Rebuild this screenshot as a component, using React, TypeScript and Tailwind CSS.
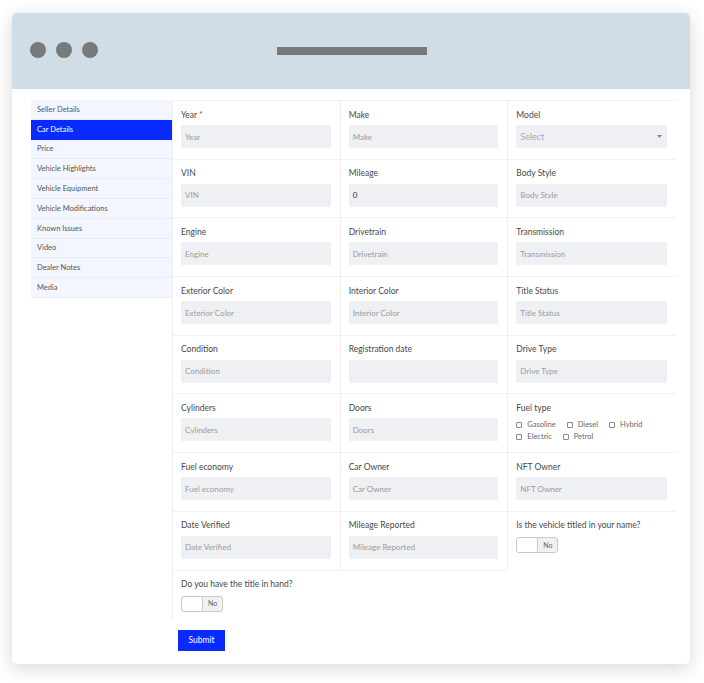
import React from "react";

const F = { fontFamily: "Lato, 'Open Sans', sans-serif" };

const sideItems = [
  "Seller Details",
  "Car Details",
  "Price",
  "Vehicle Highlights",
  "Vehicle Equipment",
  "Vehicle Modifications",
  "Known Issues",
  "Video",
  "Dealer Notes",
  "Media",
];

type Cell =
  | { kind: "input"; label: string; ph: string; value?: string; req?: boolean }
  | { kind: "select"; label: string }
  | { kind: "fuel"; label: string }
  | { kind: "toggle"; label: string };

const cells: Cell[] = [
  { kind: "input", label: "Year", ph: "Year", req: true },
  { kind: "input", label: "Make", ph: "Make" },
  { kind: "select", label: "Model" },
  { kind: "input", label: "VIN", ph: "VIN" },
  { kind: "input", label: "Mileage", ph: "", value: "0" },
  { kind: "input", label: "Body Style", ph: "Body Style" },
  { kind: "input", label: "Engine", ph: "Engine" },
  { kind: "input", label: "Drivetrain", ph: "Drivetrain" },
  { kind: "input", label: "Transmission", ph: "Transmission" },
  { kind: "input", label: "Exterior Color", ph: "Exterior Color" },
  { kind: "input", label: "Interior Color", ph: "Interior Color" },
  { kind: "input", label: "Title Status", ph: "Title Status" },
  { kind: "input", label: "Condition", ph: "Condition" },
  { kind: "input", label: "Registration date", ph: "" },
  { kind: "input", label: "Drive Type", ph: "Drive Type" },
  { kind: "input", label: "Cylinders", ph: "Cylinders" },
  { kind: "input", label: "Doors", ph: "Doors" },
  { kind: "fuel", label: "Fuel type" },
  { kind: "input", label: "Fuel economy", ph: "Fuel economy" },
  { kind: "input", label: "Car Owner", ph: "Car Owner" },
  { kind: "input", label: "NFT Owner", ph: "NFT Owner" },
  { kind: "input", label: "Date Verified", ph: "Date Verified" },
  { kind: "input", label: "Mileage Reported", ph: "Mileage Reported" },
  { kind: "toggle", label: "Is the vehicle titled in your name?" },
];

function Label({ text, req }: { text: string; req?: boolean }) {
  return (
    <div className="h-[12px] leading-[12px] text-[8.5px] text-[#484848] whitespace-nowrap">
      {text}
      {req && <span className="text-[#e53935] ml-[2px]">*</span>}
    </div>
  );
}

function Toggle() {
  return (
    <div className="flex h-[16px] w-[42px] rounded-[3px] border border-[#c9c9c9] bg-[#f1f1f1] overflow-hidden">
      <div className="w-[21px] h-full bg-white border-r border-[#c9c9c9] rounded-[2px]" />
      <div className="flex-1 flex items-center justify-center text-[7px] text-[#666]">No</div>
    </div>
  );
}

function Check({ label, gap }: { label: string; gap: string }) {
  return (
    <div className={`flex items-center ${gap}`}>
      <div className="w-[6px] h-[6px] border border-[#888] rounded-[1px] mr-[5px]" />
      <span className="text-[7.5px] text-[#666] leading-[10px]">{label}</span>
    </div>
  );
}

function CellView({ c, last, noBottom }: { c: Cell; last: boolean; noBottom: boolean }) {
  return (
    <div
      className={`h-[58.7px] pl-[8px] pr-[9px] pt-[7.5px] border-[#f0f0f0] ${last ? "" : "border-r"} ${noBottom ? "" : "border-b"}`}
    >
      <Label text={c.label} req={c.kind === "input" ? c.req : false} />
      {c.kind === "input" && (
        <div className="mt-[4.5px] h-[23px] bg-[#eff0f4] flex items-center pl-[4px] text-[8px]">
          {c.value ? (
            <span className="text-[#333]">{c.value}</span>
          ) : (
            <span className="text-[#9a9a9a]">{c.ph}</span>
          )}
        </div>
      )}
      {c.kind === "select" && (
        <div className="mt-[4.5px] h-[23px] bg-[#eff0f4] flex items-center justify-between pl-[4px] pr-[5px]">
          <span className="text-[9px] text-[#aaa]">Select</span>
          <svg width="5" height="3" viewBox="0 0 5 3">
            <path d="M0 0 L5 0 L2.5 3 Z" fill="#888" />
          </svg>
        </div>
      )}
      {c.kind === "fuel" && (
        <div className="mt-[6.5px] flex flex-col gap-[1.5px]">
          <div className="flex">
            <Check label="Gasoline" gap="mr-[11px]" />
            <Check label="Diesel" gap="mr-[11px]" />
            <Check label="Hybrid" gap="" />
          </div>
          <div className="flex">
            <Check label="Electric" gap="mr-[11px]" />
            <Check label="Petrol" gap="" />
          </div>
        </div>
      )}
      {c.kind === "toggle" && (
        <div className="mt-[6px]">
          <Toggle />
        </div>
      )}
    </div>
  );
}

export default function App() {
  return (
    <div className="w-[704px] h-[683px] bg-white pt-[13px] pl-[12px]" style={F}>
      <div className="w-[678px] h-[651px] bg-white rounded-[5px] shadow-[0_4px_18px_rgba(0,0,0,0.16)] overflow-hidden">
        <div className="h-[76px] bg-[#d0dde6] flex items-center pb-[3px] pl-[18px]">
          <div className="flex gap-[10px]">
            <div className="w-[16px] h-[16px] rounded-full bg-[#777a7b]" />
            <div className="w-[16px] h-[16px] rounded-full bg-[#777a7b]" />
            <div className="w-[16px] h-[16px] rounded-full bg-[#777a7b]" />
          </div>
          <div className="ml-[179px] mt-[2px] w-[150px] h-[8px] bg-[#777a7b]" />
        </div>
        <div className="flex pt-[11px] pl-[19px]">
          <div className="w-[141px] self-start">
            {sideItems.map((s) => {
              const active = s === "Car Details";
              return (
                <div
                  key={s}
                  className={`h-[19.8px] flex items-center pl-[6px] text-[7.5px] border-b ${
                    active
                      ? "bg-[#0a2bff] text-white border-[#0a2bff]"
                      : "bg-[#f3f6fe] text-[#555] border-[#e8edf7]"
                  }`}
                >
                  {s}
                </div>
              );
            })}
          </div>
          <div className="w-[504px]">
            <div className="grid grid-cols-3 border-l border-t border-[#f0f0f0]">
              {cells.map((c, i) => (
                <CellView key={i} c={c} last={i % 3 === 2} noBottom={i === cells.length - 1} />
              ))}
            </div>
            <div className="w-[168px] h-[50px] border-l border-[#f0f0f0] pl-[8px] pt-[7px]">
              <Label text="Do you have the title in hand?" />
              <div className="mt-[6px]">
                <Toggle />
              </div>
            </div>
            <div className="pl-[6px] pt-[9px]">
              <button className="w-[47px] h-[21px] bg-[#0a2bff] text-white text-[8.5px] flex items-center justify-center">
                Submit
              </button>
            </div>
          </div>
        </div>
      </div>
    </div>
  );
}
